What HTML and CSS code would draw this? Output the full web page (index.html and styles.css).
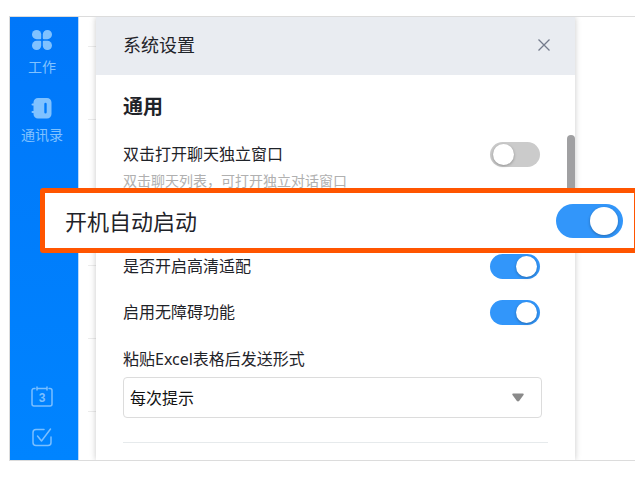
FILE: index.html
```
<!DOCTYPE html>
<html lang="zh-CN">
<head>
  <meta charset="UTF-8">
  <meta name="viewport" content="width=device-width, initial-scale=1.0">
  <title>系统设置</title>
  <link rel="stylesheet" href="styles.css">
</head>
<body>

  <div class="window">
    <nav class="sidebar">
      <a href="#work" class="nav-item">
        <svg width="20" height="20" viewBox="0 0 20 20" fill="currentColor">
          <path d="M4.6 0A4.6 4.6 0 0 1 9.2 4.6V8.2A1 1 0 0 1 8.2 9.2H4.6A4.6 4.6 0 0 1 4.6 0Z"/>
          <path d="M15.4 0A4.6 4.6 0 0 1 15.4 9.2H11.8A1 1 0 0 1 10.8 8.2V4.6A4.6 4.6 0 0 1 15.4 0Z"/>
          <path d="M4.6 10.8H8.2A1 1 0 0 1 9.2 11.8V15.4A4.6 4.6 0 1 1 4.6 10.8Z"/>
          <path d="M11.8 10.8H15.4A4.6 4.6 0 1 1 10.8 15.4V11.8A1 1 0 0 1 11.8 10.8Z"/>
        </svg>
        <span>工作</span>
      </a>
      <a href="#contacts" class="nav-item">
        <svg width="20" height="20" viewBox="0 0 20 20" fill="currentColor">
          <path fill-rule="evenodd" d="M6 0H15A4.500 4.500 0 0 1 19.500 4.500V16A4.500 4.500 0 0 1 15 20.500H6A4.500 4.500 0 0 1 1.500 16V15H0.500A1 1 0 0 1 0.500 13H1.500V7.500H0.500A1 1 0 0 1 0.500 5.500H1.500V4.500A4.500 4.500 0 0 1 6 0ZM13.500 4.800A1.200 1.200 0 0 0 12.300 6V14.300A1.200 1.200 0 0 0 14.700 14.300V6A1.200 1.200 0 0 0 13.500 4.800Z"/>
        </svg>
        <span>通讯录</span>
      </a>
      <div class="nav-bottom">
        <a href="#calendar" class="nav-icon" aria-label="日历">
          <svg width="22" height="22" viewBox="0 0 22 22" fill="none" stroke="currentColor" stroke-width="1.5" stroke-linecap="round" stroke-linejoin="round">
            <path d="M4 2.500H3A2 2 0 0 0 1 4.500V18A2 2 0 0 0 3 20H19A2 2 0 0 0 21 18V4.500A2 2 0 0 0 19 2.500H18M6 2.500H16M6 1V4M16 1V4"/>
            <text class="day" x="11" y="16" text-anchor="middle">3</text>
          </svg>
        </a>
        <a href="#todo" class="nav-icon" aria-label="待办">
          <svg width="22" height="22" viewBox="0 0 22 22" fill="none" stroke="currentColor" stroke-width="1.5" stroke-linecap="round" stroke-linejoin="round">
            <path d="M13 3.500H5A3 3 0 0 0 2 6.500V16.500A3 3 0 0 0 5 19.500H17A3 3 0 0 0 20 16.500V11M6.500 10L10.500 15L19.500 3"/>
          </svg>
        </a>
      </div>
    </nav>

    <div class="chat-list"></div>

    <section class="panel">
      <header class="panel-header">
        <h1>系统设置</h1>
        <button type="button" class="close" aria-label="关闭">
          <svg width="12" height="12" viewBox="0 0 12 12" fill="none" stroke="currentColor" stroke-width="1.3">
            <path d="M0.500 0.500L11.500 11.500M11.500 0.500L0.500 11.500"/>
          </svg>
        </button>
      </header>

      <div class="panel-body">
        <h2>通用</h2>
        <div class="row first">
          <label for="dbl">双击打开聊天独立窗口</label>
          <input type="checkbox" class="switch" id="dbl">
        </div>
        <p class="desc">双击聊天列表，可打开独立对话窗口</p>
        <div class="row">
          <div class="callout">
            <label for="autostart">开机自动启动</label>
            <input type="checkbox" class="switch large" id="autostart" checked>
          </div>
        </div>
        <div class="row">
          <label for="hd">是否开启高清适配</label>
          <input type="checkbox" class="switch" id="hd" checked>
        </div>
        <div class="row">
          <label for="a11y">启用无障碍功能</label>
          <input type="checkbox" class="switch" id="a11y" checked>
        </div>
        <div class="field">
          <label for="paste">粘贴Excel表格后发送形式</label>
          <div class="select-box">
            <select id="paste">
              <option>每次提示</option>
            </select>
            <svg class="arrow" width="12" height="9" viewBox="0 0 12 9" fill="#8a8a8a">
              <path d="M1.200 0.500H10.800Q12.300 0.700 11.500 2L7.300 7.700Q6 9.300 4.700 7.700L0.500 2Q-0.300 0.700 1.200 0.500Z"/>
            </svg>
          </div>
        </div>
        <hr>
        <div class="scrollbar"></div>
      </div>
    </section>
  </div>

</body>
</html>
```
FILE: styles.css
```
* {
  box-sizing: border-box;
}

body {
  margin: 0;
  padding: 16px 0 22px 9px;
  overflow-x: hidden;
  font-family: "Noto Sans", "Noto Sans CJK SC", sans-serif;
  font-size: 16px;
  line-height: 24px;
  color: #1f2329;
  background-color: #fff;
}

.window {
  display: flex;
  border: 1px solid #dcdcdc;
  border-right: none;
}

.sidebar {
  display: flex;
  flex-direction: column;
  width: 69px;
  padding-top: 13px;
  border-right: 1px solid #b8d9fb;
  background: linear-gradient(#0077f9, #0084ff);
}

.nav-item {
  display: flex;
  flex-direction: column;
  align-items: center;
  gap: 7px;
  height: 68px;
  font-size: 14px;
  line-height: 20px;
  padding-right: 4px;
  color: #80c2ff;
  text-decoration: none;
}

.nav-item svg {
  overflow: visible;
}

.nav-bottom {
  display: flex;
  flex-direction: column;
  align-items: center;
  gap: 18px;
  margin-top: auto;
  padding: 0 4px 12px 0;
}

.nav-icon {
  display: block;
  height: 22px;
  color: #7abfff;
}

.nav-icon svg {
  display: block;
}

.day {
  font-family: "Liberation Sans", sans-serif;
  font-size: 12px;
  font-weight: 700;
  fill: currentColor;
  stroke: none;
}

.chat-list {
  width: 8px;
  margin-left: 9px;
  background: repeating-linear-gradient(#fff 0 72px, #ececec 72px 73px);
  background-position: 0 -43px;
}

.panel {
  flex: 1;
  margin-right: 60px;
  background-color: #fff;
  box-shadow: 0 0 6px rgba(0, 0, 0, 0.22);
  clip-path: inset(0 -60px 0 -60px);
}

.panel-header {
  display: flex;
  align-items: center;
  justify-content: space-between;
  height: 58px;
  padding: 0 25px 2px 27px;
  background-color: #e9ecf1;
}

h1 {
  margin: 0;
  font-size: 18px;
  font-weight: 400;
}

.close {
  display: flex;
  padding: 0;
  border: none;
  background: none;
  color: #747b8c;
  cursor: pointer;
}

.panel-body {
  position: relative;
  padding: 18px 27px 17px;
}

h2 {
  margin: 0;
  font-size: 20px;
  line-height: 28px;
}

.row {
  position: relative;
  display: flex;
  align-items: center;
  justify-content: space-between;
  height: 46px;
  padding-right: 8px;
}

.row.first {
  height: 26px;
  margin-top: 20px;
}

.desc {
  margin: 4px 0 6px;
  font-size: 14px;
  line-height: 20px;
  color: #b0b0b0;
}

.switch {
  appearance: none;
  display: flex;
  flex: none;
  align-items: center;
  width: 50px;
  height: 25px;
  margin: 0;
  padding: 0 3px;
  border-radius: 17px;
  background-color: #cbcbcb;
  cursor: pointer;
}

.switch::before {
  content: "";
  width: 21px;
  height: 21px;
  border-radius: 50%;
  background-color: #fff;
  box-shadow: 0 1px 3px rgba(0, 0, 0, 0.3);
}

.switch:checked {
  justify-content: flex-end;
  background-color: #3296fa;
}

.switch.large {
  width: 67px;
  height: 34px;
  padding: 0 5px;
}

.switch.large::before {
  width: 28px;
  height: 28px;
}

.callout {
  position: absolute;
  z-index: 1;
  top: -9px;
  left: -83px;
  right: -91px;
  display: flex;
  align-items: center;
  justify-content: space-between;
  height: 65px;
  padding: 0 11px 0 20px;
  border: 5px solid #ff5500;
  border-radius: 3px;
  background-color: #fff;
  font-size: 22px;
}

.field {
  display: flex;
  flex-direction: column;
  gap: 6px;
  margin: 12px 6px 24px 0;
}

.select-box {
  position: relative;
}

.select-box select {
  appearance: none;
  display: block;
  width: 100%;
  height: 41px;
  padding: 0 6px;
  border: 1px solid #dcdcdc;
  border-radius: 4px;
  font: inherit;
  color: #111;
  background-color: #fff;
}

.arrow {
  position: absolute;
  top: 16px;
  right: 18px;
  pointer-events: none;
}

hr {
  height: 1px;
  margin: 0;
  border: none;
  background-color: #e6eaec;
}

.scrollbar {
  position: absolute;
  top: 60px;
  right: 0;
  width: 8px;
  height: 90px;
  border-radius: 4px;
  background-color: #a0a0a2;
}
```
